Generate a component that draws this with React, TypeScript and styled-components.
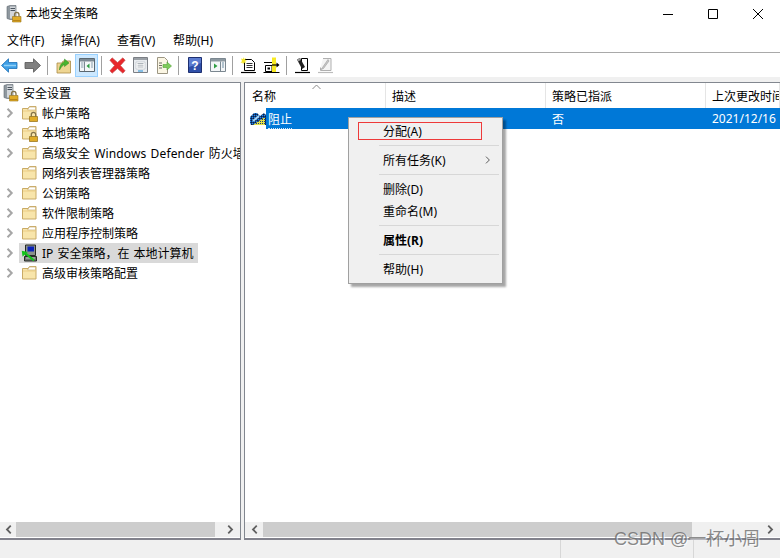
import React from 'react';
import styled, { createGlobalStyle } from 'styled-components';

const GlobalStyle = createGlobalStyle`
    html, body {
        margin: 0;
        padding: 0;
        background: #ffffff;
    }
    body {
        font-family: "Noto Sans", "Noto Sans CJK SC", sans-serif;
        font-size: 12px;
        color: #000000;
    }
`;

const Win = styled.div`
    position: relative;
    display: flex;
    flex-direction: column;
    width: 780px;
    height: 558px;
    overflow: hidden;
    background: #ffffff;
`;

const TitleBar = styled.div`
    display: flex;
    align-items: center;
    height: 28px;
    padding-left: 6px;
    flex-shrink: 0;
`;

const TitleText = styled.span`
    margin-left: 4px;
    flex: 1;
    line-height: 28px;
`;

const WinButton = styled.div`
    width: 45px;
    height: 28px;
    display: flex;
    align-items: center;
    justify-content: center;
`;

const MenuBar = styled.div`
    display: flex;
    height: 24px;
    align-items: center;
    border-bottom: 1px solid #a9a9a9;
    flex-shrink: 0;
`;

const MenuItem = styled.div<{ $w: number }>`
    padding-left: 7px;
    width: ${(p) => p.$w}px;
    box-sizing: border-box;
    white-space: nowrap;
`;

const Toolbar = styled.div`
    display: flex;
    align-items: center;
    height: 24px;
    margin-left: -2px;
    flex-shrink: 0;
`;

const ToolButton = styled.div<{ $active?: boolean }>`
    width: 23px;
    height: 23px;
    box-sizing: border-box;
    display: flex;
    align-items: center;
    justify-content: center;
    background: ${(p) => (p.$active ? '#cce8ff' : 'transparent')};
    border: 1px solid ${(p) => (p.$active ? '#99d1ff' : 'transparent')};
`;

const ToolSep = styled.div`
    width: 1px;
    height: 19px;
    margin: 0 4px 0 3px;
    background: #a0a0a0;
`;

const Band = styled.div`
    height: 5px;
    background: #f0f0f0;
    flex-shrink: 0;
`;

const Panes = styled.div`
    display: flex;
    height: 458px;
    gap: 3px;
    background: #f0f0f0;
    flex-shrink: 0;
`;

const Pane = styled.div<{ $w?: number }>`
    display: flex;
    flex-direction: column;
    box-sizing: border-box;
    width: ${(p) => (p.$w ? `${p.$w}px` : 'auto')};
    flex: ${(p) => (p.$w ? 'none' : 1)};
    min-width: 0;
    background: #ffffff;
    border-top: 1px solid #82878f;
    border-bottom: 2px solid #82828c;
`;

const LeftPane = styled(Pane)`
    border-right: 1px solid #82878f;
`;

const RightPane = styled(Pane)`
    border-left: 1px solid #82878f;
`;

const Tree = styled.div`
    flex: 1;
    overflow: hidden;
    word-spacing: 1px;
`;

const Wide = styled.span`
    letter-spacing: 0.14px;
`;

const TreeRow = styled.div`
    display: flex;
    align-items: center;
    height: 20px;
    white-space: nowrap;
`;

const RootIcon = styled.div`
    margin-left: 3px;
    width: 16px;
    height: 18px;
`;

const RootLabel = styled.span`
    margin-left: 4px;
`;

const Twisty = styled.div`
    width: 19px;
    height: 20px;
    display: flex;
    align-items: center;
    justify-content: center;
    flex-shrink: 0;
`;

const NodeBody = styled.div<{ $selected?: boolean }>`
    display: flex;
    align-items: center;
    height: 20px;
    padding: 0 4px 0 2px;
    background: ${(p) => (p.$selected ? '#d9d9d9' : 'transparent')};
`;

const NodeIcon = styled.div`
    width: 17px;
    height: 18px;
    margin-right: 4px;
    display: flex;
    align-items: center;
    justify-content: center;
`;

const ScrollBar = styled.div`
    display: flex;
    height: 15px;
    margin-bottom: 1px;
    background: #f0f0f0;
    flex-shrink: 0;
`;

const ScrollArrow = styled.div<{ $w: number; $end?: boolean }>`
    width: ${(p) => p.$w}px;
    flex: ${(p) => (p.$end ? 1 : 'none')};
    display: flex;
    align-items: center;
    justify-content: ${(p) => (p.$end ? 'flex-end' : 'center')};
    padding-right: ${(p) => (p.$end ? '5px' : 0)};
`;

const Thumb = styled.div<{ $w: number }>`
    width: ${(p) => p.$w}px;
    background: #cdcdcd;
`;

const ListHeader = styled.div`
    position: relative;
    display: grid;
    grid-template-columns: 141px 160px 160px 1fr;
    height: 25px;
    flex-shrink: 0;
`;

const HeaderCell = styled.div`
    display: flex;
    align-items: center;
    padding-left: 6px;
    border-right: 1px solid #e5e5e5;
    white-space: nowrap;
    overflow: hidden;
    &:first-child {
        padding-left: 7px;
    }
`;

const SortCaret = styled.svg`
    position: absolute;
    left: 67px;
    top: 1px;
`;

const ListBody = styled.div`
    flex: 1;
    overflow: hidden;
`;

const ListRow = styled.div`
    display: flex;
    height: 21px;
`;

const RowIcon = styled.div`
    width: 21px;
    display: flex;
    align-items: center;
    padding-left: 5px;
    box-sizing: border-box;
`;

const RowBand = styled.div`
    flex: 1;
    display: grid;
    grid-template-columns: 119px 160px 160px 1fr;
    align-items: center;
    background: #0078d7;
    color: #ffffff;
    white-space: nowrap;
`;

const RowName = styled.div`
    padding-left: 2px;
    & > span {
        border-bottom: 1px dotted #d0e8fa;
    }
`;

const RowCell = styled.div`
    padding-left: 7px;
`;

const StatusBar = styled.div`
    flex: 1;
    display: grid;
    grid-template-columns: 561px 133px 1fr;
    background: #f0f0f0;
`;

const StatusCell = styled.div`
    border-right: 1px solid #d7d7d7;
    &:last-child {
        border-right: none;
    }
`;

const ContextMenu = styled.div`
    position: absolute;
    left: 348px;
    top: 117px;
    width: 155px;
    height: 167px;
    box-sizing: border-box;
    padding-top: 2px;
    background: #f0f0f0;
    border: 1px solid #a0a0a0;
    box-shadow: 3px 3px 2px rgba(0, 0, 0, 0.35);
`;

const CtxItem = styled.div<{ $bold?: boolean }>`
    display: flex;
    align-items: center;
    justify-content: space-between;
    height: 22px;
    padding: 0 10px 0 34px;
    font-weight: ${(p) => (p.$bold ? 700 : 400)};
    white-space: nowrap;
`;

const CtxSep = styled.div`
    height: 1px;
    margin: 3px 3px 3px 30px;
    background: #d7d7d7;
`;

const RedBox = styled.div`
    position: absolute;
    left: 358px;
    top: 122px;
    width: 124px;
    height: 18px;
    box-sizing: border-box;
    border: 1px solid #ee3a3a;
`;

const Watermark = styled.div`
    position: absolute;
    left: 614px;
    top: 528px;
    font-family: "Liberation Sans", "Noto Sans CJK SC", sans-serif;
    font-size: 18px;
    line-height: 22px;
    white-space: nowrap;
    color: rgba(95, 95, 95, 0.72);
    text-shadow: 1px 1px 1px rgba(255, 255, 255, 0.8);
`;

function ServerLock(): JSX.Element {
    return (
        <svg width="16" height="18" viewBox="0 0 16 18">
            <path d="M1 1.500L4 0.500h6v14H4l-3-1z" fill="#8f989f" stroke="#5f6870" strokeWidth="0.6" />
            <path d="M4 1.500h5.500v12H4z" fill="#d3d7db" />
            <path d="M4.500 3.500h4.500M4.500 5.500h4.500" stroke="#4b5560" strokeWidth="1" />
            <path d="M6.500 11.500h8.500v5.500H6.500z" fill="#e0ac28" stroke="#9a7412" strokeWidth="0.6" />
            <path d="M8.500 11.500V9.700a2.200 2.200 0 0 1 4.500 0v1.800" fill="none" stroke="#84744a" strokeWidth="1.300" />
            <path d="M7 15.500h7.500" stroke="#b9861a" strokeWidth="1" />
        </svg>
    );
}

function Folder({ lock }: { lock?: boolean }): JSX.Element {
    return (
        <svg width="17" height="18" viewBox="0 0 17 18">
            <path d="M1.500 4.500h5.500l1.500-2h6.500v12.500H1.500z" fill="#f8e5ab" stroke="#c9aa66" strokeWidth="1" />
            <path d="M8.500 3h6v3h-8z" fill="#ffffff" stroke="#cbb37a" strokeWidth="0.7" />
            <path d="M2 7h12.500" stroke="#e8c97d" strokeWidth="0.8" />
            {lock && (
                <g>
                    <path d="M8.500 12.500h8v5h-8z" fill="#e0ac28" stroke="#8f6c12" strokeWidth="0.7" />
                    <path d="M10.300 12.500v-2a2.200 2.200 0 0 1 4.400 0v2" fill="none" stroke="#84744a" strokeWidth="1.300" />
                </g>
            )}
        </svg>
    );
}

function IpSecIcon(): JSX.Element {
    return (
        <svg width="17" height="18" viewBox="0 0 17 18">
            <path d="M4.500 1h10v10.500h-10z" fill="#8a918b" stroke="#262b27" strokeWidth="1" />
            <path d="M6.500 2.500h6.500v5H6.500z" fill="#0b22b8" />
            <path d="M3.500 12.500h12v4.500h-12z" fill="#6d746e" stroke="#262b27" strokeWidth="1" />
            <path d="M5 14h9" stroke="#c5c9c5" strokeWidth="1" />
            <path d="M4 9l9 7.500" stroke="#14c41c" strokeWidth="2.200" />
            <path d="M0.800 6.800l0.700 6 5.300-4.800z" fill="#14c41c" />
        </svg>
    );
}

function PolicyIcon(): JSX.Element {
    return (
        <svg width="16" height="16" viewBox="0 0 16 16">
            <defs>
                <pattern id="ditherBlue" width="2" height="2" patternUnits="userSpaceOnUse">
                    <rect width="2" height="2" fill="#0a3f8c" />
                    <rect width="1" height="1" fill="#2d8fe0" />
                    <rect x="1" y="1" width="1" height="1" fill="#12203f" />
                </pattern>
                <pattern id="ditherYellow" width="2" height="2" patternUnits="userSpaceOnUse">
                    <rect width="2" height="2" fill="#e3e24a" />
                    <rect width="1" height="1" fill="#1a3f7a" />
                </pattern>
            </defs>
            <path d="M0 6L4 2h3l3 3 4-3 2 2v10H1l-1-2z" fill="url(#ditherBlue)" />
            <path d="M3 14L15 6v8z" fill="url(#ditherYellow)" />
            <path d="M3 10L9 5" stroke="#a6d4f5" strokeWidth="2" />
        </svg>
    );
}

function Chevron({ dir, color = '#a6a6a6', size = 10, width = 2 }: { dir: 'l' | 'r'; color?: string; size?: number; width?: number }): JSX.Element {
    return (
        <svg width={size} height={size} viewBox="0 0 10 10">
            <path d={dir === 'r' ? 'M2.500 0.800l4.200 4.200-4.200 4.200' : 'M7.500 0.800L3.300 5l4.200 4.200'} fill="none" stroke={color} strokeWidth={width} />
        </svg>
    );
}

type TreeNode = {
    id: string;
    label: React.ReactNode;
    lock?: boolean;
    arrow?: boolean;
    ip?: boolean;
};

const treeNodes: TreeNode[] = [
    { id: 'account', label: '帐户策略', lock: true, arrow: true },
    { id: 'local', label: '本地策略', lock: true, arrow: true },
    { id: 'firewall', label: <span>高级安全 <Wide>Windows Defender</Wide> 防火墙</span>, arrow: true },
    { id: 'network', label: '网络列表管理器策略' },
    { id: 'pubkey', label: '公钥策略', arrow: true },
    { id: 'software', label: '软件限制策略', arrow: true },
    { id: 'applocker', label: '应用程序控制策略', arrow: true },
    { id: 'ipsec', label: 'IP 安全策略，在 本地计算机', arrow: true, ip: true },
    { id: 'audit', label: '高级审核策略配置', arrow: true },
];

function Toolbars(): JSX.Element {
    return (
        <Toolbar>
            <ToolButton>
                <svg width="17" height="15" viewBox="0 0 17 15">
                    <path d="M0.500 7.500L7.500 0.800v3.700H16v6H7.500v3.700z" fill="#3f9fe6" stroke="#1b6fb5" strokeWidth="0.800" />
                    <path d="M3 7.500h12" stroke="#8fd0f7" strokeWidth="1.500" />
                </svg>
            </ToolButton>
            <ToolButton>
                <svg width="17" height="15" viewBox="0 0 17 15">
                    <path d="M16.500 7.500L9.500 0.800v3.700H1v6h8.500v3.700z" fill="#808080" stroke="#565656" strokeWidth="0.800" />
                </svg>
            </ToolButton>
            <ToolSep />
            <ToolButton>
                <svg width="16" height="17" viewBox="0 0 16 17">
                    <path d="M1 6h5l1-2h7.500v12H1z" fill="#eed592" stroke="#a98a45" strokeWidth="0.800" />
                    <path d="M3.500 13C3.500 8 6 5.500 8.500 5V2L13 6l-4.500 3.500V7.500C7 8 5 10 3.500 13z" fill="#49b52f" stroke="#2c8a1e" strokeWidth="0.500" />
                </svg>
            </ToolButton>
            <ToolButton $active>
                <svg width="16" height="14" viewBox="0 0 16 14">
                    <path d="M0.500 0.500h15v13H0.500z" fill="#f3f6f8" stroke="#5a6770" />
                    <path d="M1 1h14v2.500H1z" fill="#7c8a94" />
                    <path d="M5.500 3.500V13" stroke="#7a8892" />
                    <path d="M2 5h2.500M2 7h2.500M2 9h2.500" stroke="#8aa0ae" />
                    <path d="M10.500 5.500v5L7.500 8z" fill="#2f9e44" />
                    <path d="M12 5h2M12 7h2M12 9h2" stroke="#8aa0ae" />
                </svg>
            </ToolButton>
            <ToolSep />
            <ToolButton>
                <svg width="17" height="17" viewBox="0 0 16 16">
                    <path d="M0.800 3L3 0.800 8 5.200 13 0.800 15.200 3 10.800 8l4.400 5-2.200 2.200L8 10.800 3 15.200 0.800 13 5.200 8z" fill="#e8262a" stroke="#c2585a" strokeWidth="0.600" />
                </svg>
            </ToolButton>
            <ToolButton>
                <svg width="15" height="16" viewBox="0 0 15 16">
                    <path d="M0.500 0.500h14v15H0.500z" fill="#e9ecef" stroke="#7b7f85" />
                    <path d="M1 1h13v2H1z" fill="#9aa0a6" />
                    <path d="M3 5h9v7H3z" fill="#ffffff" stroke="#b5bcc2" strokeWidth="0.600" />
                    <path d="M4.500 6.500h6M4.500 8.200h6M4.500 10h6" stroke="#8a949c" strokeWidth="0.700" />
                    <path d="M5 14h5" stroke="#5aa9e0" strokeWidth="1.400" />
                </svg>
            </ToolButton>
            <ToolButton>
                <svg width="16" height="17" viewBox="0 0 16 17">
                    <path d="M1.500 0.500h7l3 3v13h-10z" fill="#fbf6e4" stroke="#9c9683" />
                    <path d="M3 6h3M3 8.500h3M3 11h3" stroke="#6b6b60" />
                    <path d="M7 7.500h4V5l4.500 4-4.500 4v-2.500H7z" fill="#7ecb5a" stroke="#53a336" strokeWidth="0.600" />
                </svg>
            </ToolButton>
            <ToolSep />
            <ToolButton>
                <svg width="14" height="16" viewBox="0 0 14 16">
                    <path d="M0.500 0.500h13v15h-13z" fill="#2f4fa8" stroke="#1d2f70" />
                    <path d="M1 1h12v5L1 10z" fill="#5c7cd0" />
                    <text x="7" y="12.500" textAnchor="middle" fontFamily="Liberation Sans" fontSize="12" fontWeight="700" fill="#ffffff">?</text>
                </svg>
            </ToolButton>
            <ToolButton>
                <svg width="16" height="14" viewBox="0 0 16 14">
                    <path d="M0.500 0.500h15v13H0.500z" fill="#f3f6f8" stroke="#7b8790" />
                    <path d="M1 1h14v2.500H1z" fill="#8c98a0" />
                    <path d="M10.500 3.500V13" stroke="#7a8892" />
                    <path d="M4 5.500v5L7.500 8z" fill="#2f9e44" />
                    <path d="M12 5h2M12 7h2M12 9h2" stroke="#6f8ea3" />
                </svg>
            </ToolButton>
            <ToolSep />
            <ToolButton>
                <svg width="17" height="17" viewBox="0 0 17 17">
                    <path d="M4.500 2.500h7l3 3v8h-10z" fill="#ffffff" stroke="#000000" />
                    <path d="M6.500 6.500h6M6.500 8.500h6M6.500 10.500h6" stroke="#000000" strokeWidth="0.800" />
                    <path d="M1 15.500h15" stroke="#000000" strokeWidth="1.200" />
                    <path d="M3 0l1 2 2-1-1 2 2 1-2 .5 1 2-2-1-1 2-.5-2-2 .5 1.500-2L1 1.500 3 2z" fill="#f4e62c" />
                </svg>
            </ToolButton>
            <ToolButton>
                <svg width="17" height="17" viewBox="0 0 17 17">
                    <path d="M1 5.500h9" stroke="#000000" />
                    <path d="M2.500 8.500h6.500v6H2.500z" fill="#ffffff" stroke="#000000" />
                    <path d="M4.500 10.500h2.500v2H4.500z" fill="#000000" />
                    <path d="M9 0.500h4v15H9z" fill="#f8ea22" />
                    <path d="M9 8h5.500" stroke="#000000" strokeWidth="1.200" />
                    <path d="M13.500 5.500l3 2.500-3 2.500z" fill="#000000" />
                    <path d="M0.500 15.500h16" stroke="#000000" />
                </svg>
            </ToolButton>
            <ToolSep />
            <ToolButton>
                <svg width="17" height="17" viewBox="0 0 17 17">
                    <path d="M7.500 1.500h6v12h-6z" fill="#ffffff" stroke="#000000" />
                    <path d="M3 2.500l3-1.500 5 9-3 2z" fill="#222222" />
                    <path d="M3 2.500l3-1.500 1 2-3 1.500z" fill="#9a9a9a" />
                    <path d="M1 15.500h15" stroke="#000000" strokeWidth="1.200" />
                </svg>
            </ToolButton>
            <ToolButton>
                <svg width="17" height="17" viewBox="0 0 17 17">
                    <path d="M6 1.500h8v12H3.500v-3" fill="#f4f4f4" stroke="#b0b0b0" />
                    <path d="M11 2.500L5.500 10.500l-1.500 2 2.500-1L12 4z" fill="#c8c8c8" stroke="#9a9a9a" strokeWidth="0.600" />
                    <path d="M1 15.500h15" stroke="#bcbcbc" strokeWidth="1.200" />
                </svg>
            </ToolButton>
        </Toolbar>
    );
}

function App(): JSX.Element {
    return (
        <Win>
            <GlobalStyle />
            <TitleBar>
                <ServerLock />
                <TitleText>本地安全策略</TitleText>
                <WinButton>
                    <svg width="10" height="10" viewBox="0 0 10 10"><path d="M0 5.500h10" stroke="#000" strokeWidth="1" /></svg>
                </WinButton>
                <WinButton>
                    <svg width="10" height="10" viewBox="0 0 10 10"><path d="M0.500 0.500h9v9h-9z" fill="none" stroke="#000" strokeWidth="1" /></svg>
                </WinButton>
                <WinButton>
                    <svg width="10" height="10" viewBox="0 0 10 10"><path d="M0 0l10 10M10 0L0 10" stroke="#000" strokeWidth="1" /></svg>
                </WinButton>
            </TitleBar>
            <MenuBar>
                <MenuItem $w={54}>文件(F)</MenuItem>
                <MenuItem $w={56}>操作(A)</MenuItem>
                <MenuItem $w={56}>查看(V)</MenuItem>
                <MenuItem $w={56}>帮助(H)</MenuItem>
            </MenuBar>
            <Toolbars />
            <Band />
            <Panes>
                <LeftPane $w={241}>
                    <Tree>
                        <TreeRow>
                            <RootIcon><ServerLock /></RootIcon>
                            <RootLabel>安全设置</RootLabel>
                        </TreeRow>
                        {treeNodes.map((n) => (
                            <TreeRow key={n.id}>
                                <Twisty>{n.arrow && <Chevron dir="r" />}</Twisty>
                                <NodeBody $selected={n.ip}>
                                    <NodeIcon>{n.ip ? <IpSecIcon /> : <Folder lock={n.lock} />}</NodeIcon>
                                    {n.label}
                                </NodeBody>
                            </TreeRow>
                        ))}
                    </Tree>
                    <ScrollBar>
                        <ScrollArrow $w={16}><Chevron dir="l" color="#606060" size={9} /></ScrollArrow>
                        <Thumb $w={199} />
                        <ScrollArrow $w={24} $end><Chevron dir="r" color="#606060" size={9} /></ScrollArrow>
                    </ScrollBar>
                </LeftPane>
                <RightPane>
                    <ListHeader>
                        <HeaderCell>名称</HeaderCell>
                        <HeaderCell>描述</HeaderCell>
                        <HeaderCell>策略已指派</HeaderCell>
                        <HeaderCell>上次更改时间</HeaderCell>
                        <SortCaret width="9" height="6" viewBox="0 0 9 6">
                            <path d="M0.500 5L4.500 1l4 4" fill="none" stroke="#8a8a8a" />
                        </SortCaret>
                    </ListHeader>
                    <ListBody>
                        <ListRow>
                            <RowIcon><PolicyIcon /></RowIcon>
                            <RowBand>
                                <RowName><span>阻止</span></RowName>
                                <RowCell />
                                <RowCell>否</RowCell>
                                <RowCell>2021/12/16</RowCell>
                            </RowBand>
                        </ListRow>
                    </ListBody>
                    <ScrollBar>
                        <ScrollArrow $w={18}><Chevron dir="l" color="#606060" size={9} /></ScrollArrow>
                        <Thumb $w={429} />
                        <ScrollArrow $w={88} $end><Chevron dir="r" color="#606060" size={9} /></ScrollArrow>
                    </ScrollBar>
                </RightPane>
            </Panes>
            <StatusBar>
                <StatusCell />
                <StatusCell />
                <StatusCell />
            </StatusBar>
            <ContextMenu>
                <CtxItem>分配(A)</CtxItem>
                <CtxSep />
                <CtxItem>
                    所有任务(K)
                    <Chevron dir="r" color="#555555" size={8} width={1.2} />
                </CtxItem>
                <CtxSep />
                <CtxItem>删除(D)</CtxItem>
                <CtxItem>重命名(M)</CtxItem>
                <CtxSep />
                <CtxItem $bold>属性(R)</CtxItem>
                <CtxSep />
                <CtxItem>帮助(H)</CtxItem>
            </ContextMenu>
            <RedBox />
            <Watermark>CSDN @一杯小周</Watermark>
        </Win>
    );
}

export default App;
